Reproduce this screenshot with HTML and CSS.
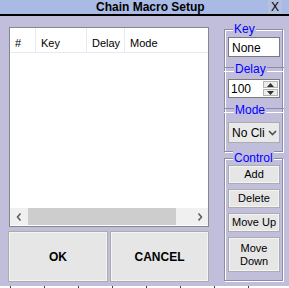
FILE: index.html
```html
<!DOCTYPE html>
<html lang="en">
<head>
    <meta charset="UTF-8">
    <title>Chain Macro Setup</title>
    <link rel="stylesheet" href="styles.css">
</head>
<body>
    <div class="window">
        <div class="titlebar">
            <span class="title">Chain Macro Setup</span>
            <span class="close">X</span>
        </div>

        <div class="content">
            <div class="left">
                <div class="listbox">
                    <div class="list-header">
                        <div class="col col-num">#</div>
                        <div class="col col-key">Key</div>
                        <div class="col col-delay">Delay</div>
                        <div class="col col-mode">Mode</div>
                    </div>
                    <div class="list-body"></div>
                    <div class="hscroll">
                        <div class="arrow">
                            <svg width="6" height="8" viewBox="0 0 6 8"><path d="M4.5 0.5 L1.5 4 L4.5 7.5" fill="none" stroke="#606060" stroke-width="1.6"/></svg>
                        </div>
                        <div class="thumb"></div>
                        <div class="track"></div>
                        <div class="arrow">
                            <svg width="6" height="8" viewBox="0 0 6 8"><path d="M1.5 0.5 L4.5 4 L1.5 7.5" fill="none" stroke="#606060" stroke-width="1.6"/></svg>
                        </div>
                    </div>
                </div>
                <div class="actions">
                    <button class="big-btn ok">OK</button>
                    <button class="big-btn cancel">CANCEL</button>
                </div>
            </div>

            <div class="side">
                <div class="frame settings">
                    <span class="legend">Key</span>
                    <div class="textbox">None</div>

                    <div class="divider"><span class="legend-inline">Delay</span></div>
                    <div class="spinbox">
                        <span class="spin-value">100</span>
                        <div class="spin-buttons">
                            <div class="spin-btn">
                                <svg width="7" height="4" viewBox="0 0 7 4"><path d="M0 4 L3.5 0 L7 4 Z" fill="#303030"/></svg>
                            </div>
                            <div class="spin-btn">
                                <svg width="7" height="4" viewBox="0 0 7 4"><path d="M0 0 L3.5 4 L7 0 Z" fill="#303030"/></svg>
                            </div>
                        </div>
                    </div>

                    <div class="divider"><span class="legend-inline">Mode</span></div>
                    <div class="combo">
                        <span class="combo-value">No Cli</span>
                        <span class="combo-arrow">
                            <svg width="9" height="6" viewBox="0 0 9 6"><path d="M1 1 L4.5 4.5 L8 1" fill="none" stroke="#505050" stroke-width="1.6"/></svg>
                        </span>
                    </div>
                </div>

                <div class="frame control">
                    <span class="legend">Control</span>
                    <button class="small-btn">Add</button>
                    <button class="small-btn">Delete</button>
                    <button class="small-btn">Move Up</button>
                    <button class="small-btn tall">Move<br>Down</button>
                </div>
            </div>
        </div>

        <div class="status-strip">
            <span></span><span></span><span></span><span></span><span></span><span></span><span></span><span></span>
        </div>
    </div>
</body>
</html>
```

FILE: styles.css
```css
* {
    margin: 0;
    padding: 0;
    box-sizing: border-box;
}

body {
    width: 289px;
    height: 288px;
    overflow: hidden;
    font-family: 'Liberation Sans', Arial, sans-serif;
    font-size: 11px;
    color: #000000;
    background-color: #c0bedb;
}

.window {
    width: 289px;
    height: 288px;
    display: flex;
    flex-direction: column;
}

/* title bar */
.titlebar {
    height: 16px;
    background-color: #a9bbe5;
    border-bottom: 2px solid #000000;
    display: flex;
    align-items: flex-start;
}

.title {
    flex: 1;
    padding-left: 96px;
    font-size: 12px;
    font-weight: bold;
    line-height: 14px;
}

.close {
    width: 14px;
    height: 14px;
    margin-right: 7px;
    background-color: #b5c0de;
    font-size: 12px;
    line-height: 14px;
    text-align: center;
}

/* main area */
.content {
    flex: 1;
    display: flex;
    padding-left: 8px;
}

.left {
    width: 201px;
    display: flex;
    flex-direction: column;
}

.listbox {
    margin: 11px 0 0 1px;
    width: 200px;
    height: 200px;
    border: 1px solid #828790;
    background-color: #ffffff;
    display: flex;
    flex-direction: column;
}

.list-header {
    height: 25px;
    display: flex;
    border-bottom: 1px solid #e5eaf5;
}

.col {
    padding: 9px 0 0 5px;
    border-right: 1px solid #e5eaf5;
}

.col-num { width: 26px; }
.col-key { width: 51px; }
.col-delay { width: 38px; }
.col-mode { flex: 1; border-right: none; }

.list-body {
    flex: 1;
}

.hscroll {
    height: 17px;
    margin-bottom: 1px;
    display: flex;
    align-items: stretch;
    background-color: #f0f0f0;
}

.arrow {
    width: 17px;
    display: flex;
    align-items: center;
    justify-content: center;
}

.thumb {
    width: 148px;
    margin: 0 0 0 1px;
    background-color: #cdcdcd;
}

.track {
    flex: 1;
}

.actions {
    margin-top: 4px;
    display: flex;
    gap: 2px;
}

.big-btn {
    height: 51px;
    border: 1px solid #adadad;
    box-shadow: inset 0 0 0 1px #f4f4f4;
    background-color: #e6e6e6;
    font-family: 'Liberation Sans', Arial, sans-serif;
    font-size: 12px;
    font-weight: bold;
    color: #000000;
}

.ok { width: 100px; }
.cancel { width: 99px; }

/* right column */
.side {
    margin-left: 15px;
    width: 59px;
    display: flex;
    flex-direction: column;
}

.frame {
    border: 1px solid #8d8ca6;
    box-shadow: inset 1px 1px 0 #ffffff, 1px 1px 0 #ffffff;
    display: flex;
    flex-direction: column;
    padding: 0 2px 0 3px;
}

.legend {
    align-self: flex-start;
    margin: -8px 0 0 5px;
    padding: 0 1px;
    background-color: #c0bedb;
    color: #0000ff;
    font-size: 12px;
    line-height: 14px;
}

.settings {
    margin-top: 13px;
    height: 123px;
}

.textbox {
    margin-top: 1px;
    width: 52px;
    height: 20px;
    border: 1px solid #7a7a7a;
    background-color: #ffffff;
    padding: 3px 0 0 3px;
    font-size: 12px;
}

.divider {
    margin: 5px -4px 0 -4px;
    height: 14px;
    display: flex;
    align-items: center;
}

.divider::before,
.divider::after {
    content: '';
    height: 3px;
    border-top: 1px solid #8d8ca6;
    border-bottom: 1px solid #ffffff;
}

.divider::before {
    width: 10px;
}

.divider::after {
    flex: 1;
}

.legend-inline {
    padding: 0 1px;
    color: #0000ff;
    font-size: 12px;
    line-height: 14px;
}

.spinbox {
    margin-top: 3px;
    width: 52px;
    height: 19px;
    border: 1px solid #7a7a7a;
    background-color: #ffffff;
    display: flex;
    font-size: 12px;
}

.spin-value {
    flex: 1;
    padding: 2px 0 0 2px;
}

.spin-buttons {
    width: 16px;
    padding: 1px 1px 1px 0;
    display: flex;
    flex-direction: column;
    gap: 1px;
}

.spin-btn {
    flex: 1;
    background-color: #ececec;
    border: 1px solid #b4b4b4;
    display: flex;
    align-items: center;
    justify-content: center;
}

.combo {
    margin-top: 5px;
    width: 52px;
    height: 21px;
    border: 1px solid #acacac;
    background-color: #e9e9e9;
    display: flex;
    align-items: center;
    font-size: 12px;
}

.combo-value {
    width: 37px;
    padding-left: 3px;
    white-space: nowrap;
}

.combo-arrow {
    flex: 1;
    display: flex;
    justify-content: center;
}

.control {
    margin-top: 6px;
    height: 123px;
    padding-top: 9px;
    gap: 5px;
}

.control .legend {
    margin-top: -17px;
    margin-bottom: -5px;
}

.small-btn {
    width: 52px;
    height: 19px;
    border: 1px solid #adadad;
    box-shadow: inset 0 0 0 1px #f4f4f4;
    background-color: #e6e6e6;
    font-family: 'Liberation Sans', Arial, sans-serif;
    font-size: 11px;
    line-height: 13px;
    color: #000000;
}

.small-btn.tall {
    height: 35px;
}

/* cut-off strip at bottom edge */
.status-strip {
    height: 2px;
    background-color: #ffffff;
    display: flex;
    gap: 33px;
    padding-left: 10px;
}

.status-strip span {
    width: 1px;
    height: 2px;
    background-color: #404040;
}
```
